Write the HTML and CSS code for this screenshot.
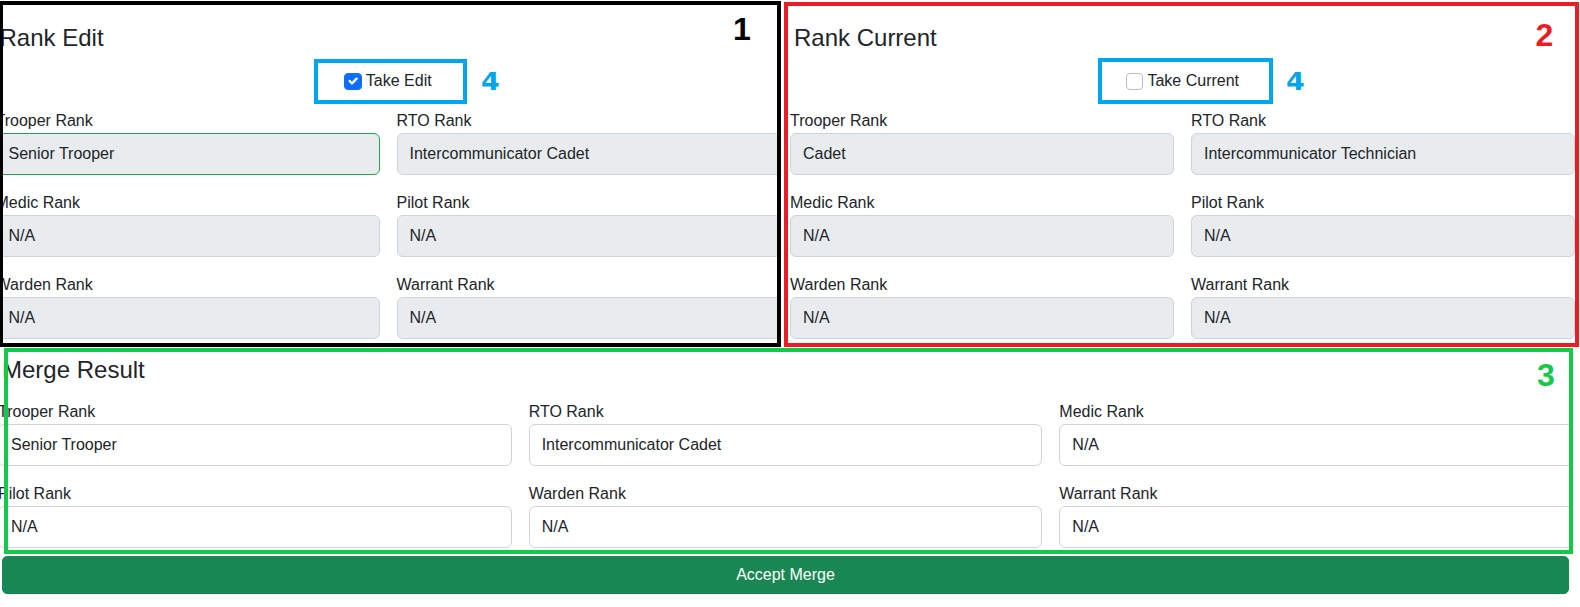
FILE: index.html
```html
<!DOCTYPE html>
<html lang="en">
<head>
<meta charset="utf-8">
<title>Rank Merge</title>
<link rel="stylesheet" href="styles.css">
</head>
<body>
<div class="page">
  <div class="top">
    <section class="panel">
      <h4 class="title">Rank Edit</h4>
      <div class="take-row">
        <label class="take"><span class="check checked"><svg viewBox="0 0 20 20" width="18" height="18"><path d="M6 10l3 3 6-6" fill="none" stroke="#fff" stroke-width="3" stroke-linecap="round" stroke-linejoin="round"/></svg></span>Take Edit</label>
      </div>
      <div class="fields two">
        <div class="field"><label>Trooper Rank</label><input class="ctl ro valid" type="text" value="Senior Trooper" readonly></div>
        <div class="field"><label>RTO Rank</label><input class="ctl ro" type="text" value="Intercommunicator Cadet" readonly></div>
        <div class="field"><label>Medic Rank</label><input class="ctl ro" type="text" value="N/A" readonly></div>
        <div class="field"><label>Pilot Rank</label><input class="ctl ro" type="text" value="N/A" readonly></div>
        <div class="field"><label>Warden Rank</label><input class="ctl ro" type="text" value="N/A" readonly></div>
        <div class="field"><label>Warrant Rank</label><input class="ctl ro" type="text" value="N/A" readonly></div>
      </div>
    </section>
    <section class="panel">
      <h4 class="title">Rank Current</h4>
      <div class="take-row">
        <label class="take"><span class="check"></span>Take Current</label>
      </div>
      <div class="fields two">
        <div class="field"><label>Trooper Rank</label><input class="ctl ro" type="text" value="Cadet" readonly></div>
        <div class="field"><label>RTO Rank</label><input class="ctl ro" type="text" value="Intercommunicator Technician" readonly></div>
        <div class="field"><label>Medic Rank</label><input class="ctl ro" type="text" value="N/A" readonly></div>
        <div class="field"><label>Pilot Rank</label><input class="ctl ro" type="text" value="N/A" readonly></div>
        <div class="field"><label>Warden Rank</label><input class="ctl ro" type="text" value="N/A" readonly></div>
        <div class="field"><label>Warrant Rank</label><input class="ctl ro" type="text" value="N/A" readonly></div>
      </div>
    </section>
  </div>

  <section class="merge">
    <h4 class="title">Merge Result</h4>
    <div class="fields three">
      <div class="field"><label>Trooper Rank</label><input class="ctl" type="text" value="Senior Trooper"></div>
      <div class="field"><label>RTO Rank</label><input class="ctl" type="text" value="Intercommunicator Cadet"></div>
      <div class="field"><label>Medic Rank</label><input class="ctl" type="text" value="N/A"></div>
      <div class="field"><label>Pilot Rank</label><input class="ctl" type="text" value="N/A"></div>
      <div class="field"><label>Warden Rank</label><input class="ctl" type="text" value="N/A"></div>
      <div class="field"><label>Warrant Rank</label><input class="ctl" type="text" value="N/A"></div>
    </div>
  </section>

  <button class="accept" type="button">Accept Merge</button>

  <div class="mark mark-black"></div>
  <div class="mark mark-red"></div>
  <div class="mark mark-green"></div>
  <div class="mark mark-blue mark-blue-1"></div>
  <div class="mark mark-blue mark-blue-2"></div>
  <span class="num num-1">1</span>
  <span class="num num-2">2</span>
  <span class="num num-3">3</span>
  <span class="num4 num4-1">4</span>
  <span class="num4 num4-2">4</span>
</div>
</body>
</html>
```

FILE: styles.css
```css
html, body {
  margin: 0;
  padding: 0;
  background: #fff;
  overflow: hidden;
}

body {
  font-family: "Liberation Sans", Arial, sans-serif;
  font-size: 16px;
  line-height: 24px;
  color: #212529;
}

.page {
  position: relative;
  width: 1580px;
  height: 607px;
  overflow: hidden;
}

/* ---------- top two panels ---------- */
.top {
  display: grid;
  grid-template-columns: 785px 785px;
  column-gap: 9.5px;
  margin-left: -4.5px;
  padding-top: 24px;
  padding-bottom: 17px;
}

.title {
  margin: 0 0 16px 0;
  padding-left: 4px;
  font-size: 24px;
  line-height: 28.8px;
  font-weight: 400;
  color: #212529;
}

.take-row {
  display: flex;
  justify-content: center;
  margin-bottom: 16px;
  height: 24px;
}

.take {
  display: flex;
  align-items: center;
  gap: 4px;
  font-size: 16px;
  line-height: 24px;
}

.check {
  width: 17.5px;
  height: 17.5px;
  box-sizing: border-box;
  border: 1px solid #b9bcc0;
  border-radius: 4px;
  background: #fff;
  display: flex;
  align-items: center;
  justify-content: center;
  margin-top: 1px;
}

.check.checked {
  background: #0d6efd;
  border-color: #0d6efd;
}

.check svg {
  width: 16px;
  height: 16px;
}

.fields {
  display: grid;
  row-gap: 16px;
}

.fields.two {
  grid-template-columns: 1fr 1fr;
  column-gap: 17px;
}

.fields.three {
  grid-template-columns: 1fr 1fr 1fr;
  column-gap: 17px;
}

.field {
  display: flex;
  flex-direction: column;
}

.field label {
  display: block;
  font-size: 16px;
  line-height: 24px;
}

.ctl {
  display: block;
  box-sizing: border-box;
  width: 100%;
  height: 42px;
  margin: 0;
  padding: 0 12px;
  font-family: "Liberation Sans", Arial, sans-serif;
  font-size: 16px;
  color: #212529;
  background: #fff;
  border: 1px solid #ced4da;
  border-radius: 6px;
  outline: none;
}

.ctl.ro {
  background: #e9ecef;
  border-color: #ced4da;
}

.ctl.valid {
  border-color: #27a053;
}

/* ---------- merge ---------- */
.merge {
  width: 1575px;
  margin-left: -2px;
}

.merge .title {
  margin-bottom: 15px;
}

.accept {
  display: block;
  box-sizing: border-box;
  width: 1567px;
  height: 38px;
  margin: 8.4px 0 0 2px;
  padding: 0;
  font-family: "Liberation Sans", Arial, sans-serif;
  font-size: 16px;
  line-height: 24px;
  color: #fff;
  background: #198754;
  border: 1px solid #198754;
  border-radius: 5px;
}

/* ---------- annotation overlay ---------- */
.mark {
  position: absolute;
  box-sizing: border-box;
  border: 4px solid #000;
  pointer-events: none;
}

.mark-black {
  left: -1px;
  top: 1px;
  width: 782px;
  height: 346px;
  border-color: #000;
}

.mark-red {
  left: 784px;
  top: 2px;
  width: 795px;
  height: 345px;
  border-color: #ed1c24;
}

.mark-green {
  left: 3.5px;
  top: 348px;
  width: 1569.5px;
  height: 206px;
  border-color: #14c94a;
}

.mark-blue {
  border-color: #00a6ed;
}

.mark-blue-1 {
  left: 314px;
  top: 59px;
  width: 152.5px;
  height: 44.5px;
}

.mark-blue-2 {
  left: 1098px;
  top: 58px;
  width: 175px;
  height: 46px;
}

.num {
  position: absolute;
  font-family: "Liberation Sans", Arial, sans-serif;
  font-weight: 700;
  font-size: 32px;
  line-height: 32px;
}

.num-1 { left: 733px; top: 12.5px; color: #000; }
.num-2 { left: 1535.5px; top: 18.5px; color: #ed1c24; }
.num-3 { left: 1537px; top: 358.5px; color: #14c94a; }

.num4 {
  position: absolute;
  font-family: "DejaVu Sans", "Liberation Sans", sans-serif;
  font-weight: 700;
  font-size: 24px;
  line-height: 24px;
  color: #00a6ed;
  transform: scaleX(1.12);
  transform-origin: left center;
}

.num4-1 { left: 480.5px; top: 70px; }
.num4-2 { left: 1286px; top: 70px; }
```
